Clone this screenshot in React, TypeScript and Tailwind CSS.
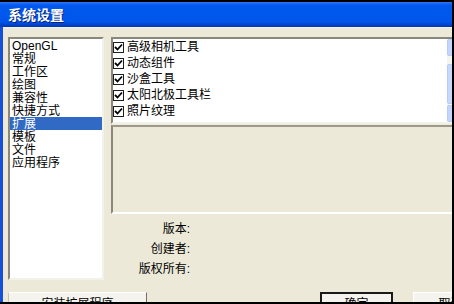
import React from 'react';

const CATEGORIES = ['OpenGL', '常规', '工作区', '绘图', '兼容性', '快捷方式', '扩展', '模板', '文件', '应用程序'];
const EXTENSIONS = ['高级相机工具', '动态组件', '沙盒工具', '太阳北极工具栏', '照片纹理'];
const INFO_LABELS = ['版本:', '创建者:', '版权所有:'];

const CheckBox: React.FC = () => (
  <span className="w-[11px] h-[11px] border border-[#1e1e1e] bg-white flex items-center justify-center shrink-0">
    <svg width="9" height="9" viewBox="0 0 9 9">
      <path d="M1 4 L3.5 6.5 L8 1.5" stroke="#000" strokeWidth="1.8" fill="none" />
    </svg>
  </span>
);

const ScrollButton: React.FC<{ up?: boolean }> = ({ up }) => (
  <div className="h-[17px] w-[17px] rounded-[2px] border border-[#b8cbf4] bg-[#c4d4fc] flex items-center justify-center">
    <svg width="8" height="6" viewBox="0 0 8 6">
      <path d={up ? 'M1 5 L4 2 L7 5' : 'M1 1 L4 4 L7 1'} stroke="#4d6185" strokeWidth="1.6" fill="none" />
    </svg>
  </div>
);

const App: React.FC = () => {
  const selected = '扩展';

  return (
    <div className="w-[454px] h-[304px] bg-black overflow-hidden pt-[2px] font-['Liberation_Sans','Noto_Sans_CJK_SC',sans-serif] text-[12px] leading-none">
      <div className="w-[452px] h-[300px] bg-[#1650d8] flex flex-col overflow-hidden">
        {/* Title bar */}
        <div className="h-[25px] shrink-0 flex items-center pl-[8px] bg-[linear-gradient(to_bottom,#2e74f2_0%,#0058ee_14%,#0056ea_78%,#0046d2_90%,#0036ad_100%)]">
          <span className="text-white font-bold text-[14px] [text-shadow:1px_1px_0_#0a1f6e]">系统设置</span>
        </div>

        {/* Body */}
        <div className="flex-1 ml-[3px] bg-[#ece9d8] border-t border-[#f4f3ec] pl-[5px] pt-[9px] overflow-hidden">
          <div className="flex gap-[7px]">
            {/* Category list */}
            <div className="w-[96px] h-[243px] shrink-0 bg-white border-[2px] border-t-[#8a887c] border-l-[#8a887c] border-r-[#f2f1ea] border-b-[#f2f1ea]">
              {CATEGORIES.map(c => (
                <div
                  key={c}
                  className={`h-[13px] flex items-center pl-[2px] ${
                    c === selected ? 'bg-[#316ac5] text-white' : 'text-black'
                  }`}
                >
                  {c}
                </div>
              ))}
            </div>

            {/* Right column */}
            <div className="w-[355px] shrink-0 flex flex-col">
              <div className="h-[87px] bg-white border-[2px] border-t-[#8a887c] border-l-[#8a887c] border-r-[#f2f1ea] border-b-[#f2f1ea] flex">
                <div className="flex-1">
                  {EXTENSIONS.map(e => (
                    <div key={e} className="h-[16px] flex items-center gap-[3px] text-black">
                      <CheckBox />
                      <span>{e}</span>
                    </div>
                  ))}
                </div>
                <div className="w-[17px] bg-[#f5f4ef] flex flex-col">
                  <ScrollButton up />
                  <div className="flex-1 pt-[8px]">
                    <div className="h-[40px] rounded-[2px] border border-[#b8cbf4] bg-[#c8d7fc] flex flex-col items-center justify-center gap-[1px]">
                      <div className="w-[6px] h-[1px] bg-[#eef3ff]" />
                      <div className="w-[6px] h-[1px] bg-[#8ca6da]" />
                      <div className="w-[6px] h-[1px] bg-[#eef3ff]" />
                      <div className="w-[6px] h-[1px] bg-[#8ca6da]" />
                    </div>
                  </div>
                  <ScrollButton />
                </div>
              </div>

              {/* Description panel */}
              <div className="mt-[1px] h-[89px] border-[2px] border-t-[#9d9a8c] border-l-[#8a887c] border-b-white border-r-white" />

              {/* Info labels */}
              <div className="mt-[5px] w-[79px] text-right text-black">
                {INFO_LABELS.map(l => (
                  <div key={l} className="h-[20px] leading-[20px]">{l}</div>
                ))}
              </div>
            </div>
          </div>

          {/* Buttons */}
          <div className="flex mt-[12px]">
            <button className="w-[139px] h-[23px] shrink-0 bg-[#f4f3ee] border border-t-white border-l-[#c8c5b6] border-r-[#716f64] border-b-[#716f64] text-black text-[12px]">
              安装扩展程序
            </button>
            <button className="ml-[173px] w-[73px] h-[23px] shrink-0 bg-[#f4f3ee] border-[2px] border-[#1a1a1a] text-black text-[12px]">
              确定
            </button>
            <button className="ml-[20px] w-[75px] h-[23px] shrink-0 bg-[#f4f3ee] border border-t-white border-l-white border-r-[#716f64] border-b-[#716f64] text-black text-[12px]">
              取消
            </button>
          </div>
        </div>
      </div>
    </div>
  );
};

export default App;
